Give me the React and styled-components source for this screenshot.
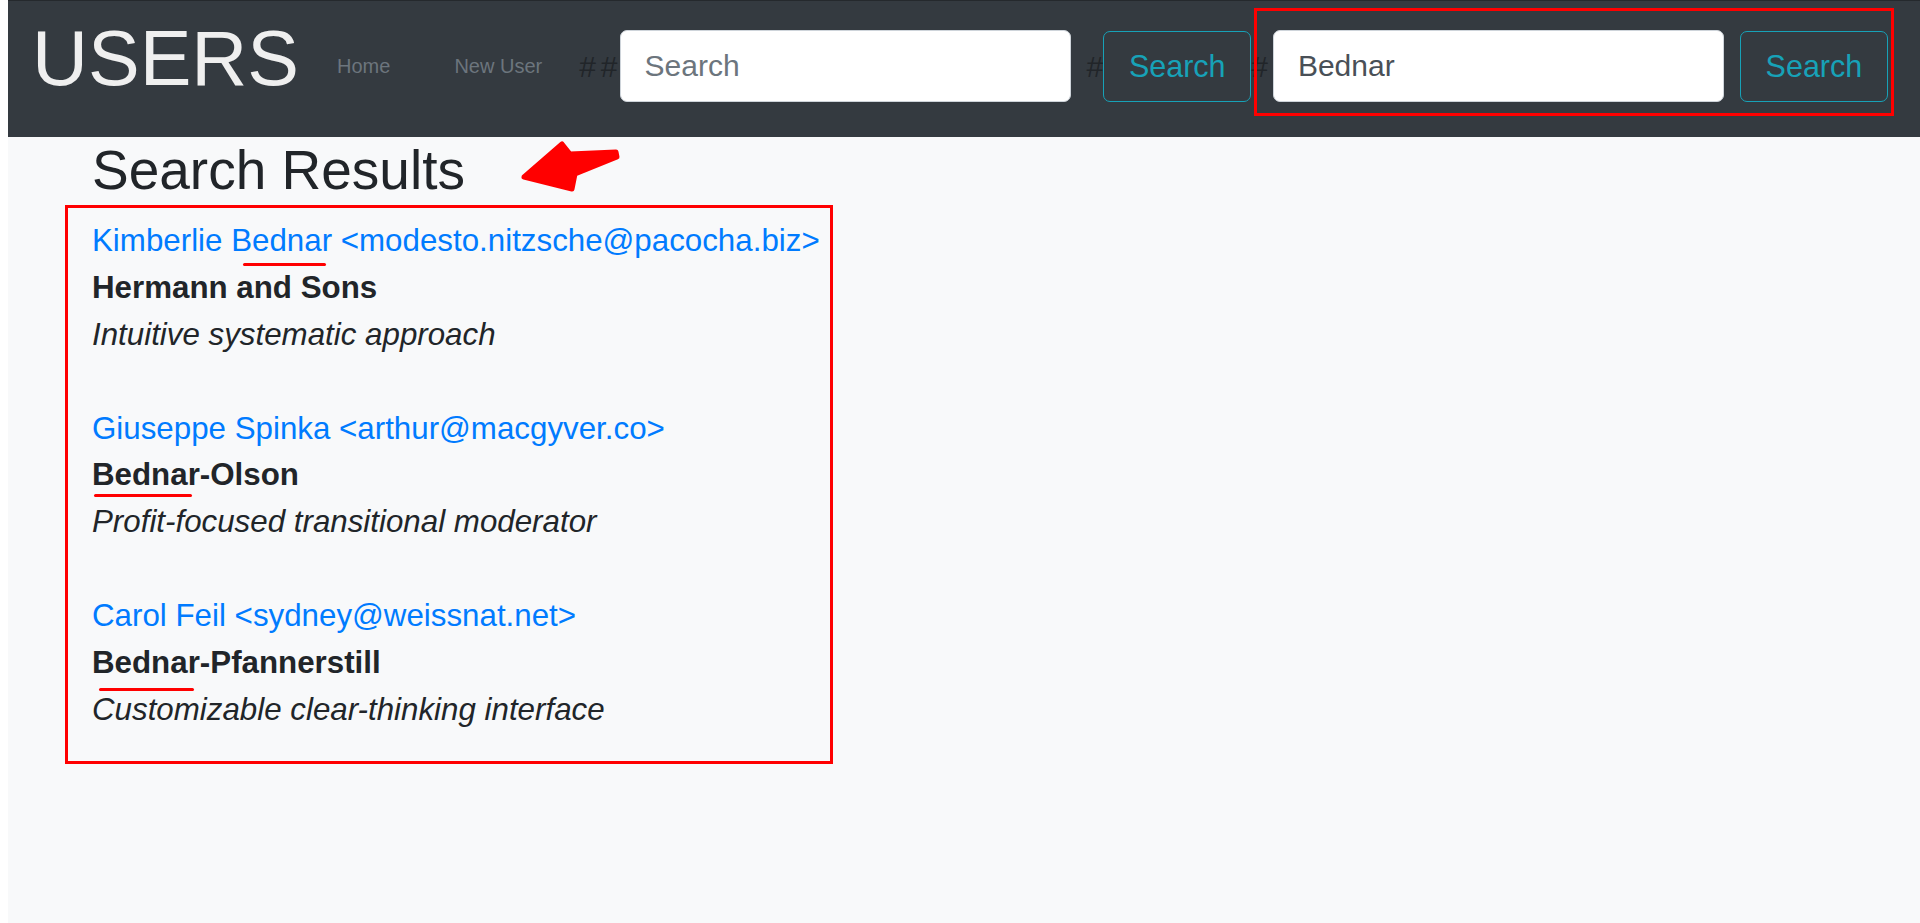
import React from "react";
import styled, { createGlobalStyle } from "styled-components";

const GlobalStyle = createGlobalStyle`
  html, body { margin: 0; padding: 0; background: #ffffff; }
  body {
    padding-left: 8px;
    font-family: "Liberation Sans", Arial, Helvetica, sans-serif;
    color: #212529;
  }
  * { box-sizing: border-box; }
`;

const Page = styled.div`
  min-height: 923px;
  background: #f8f9fa;
`;

const Navbar = styled.nav`
  display: flex;
  align-items: center;
  height: 137px;
  padding: 0 31px 6px 24px;
  background: #343a40;
  border-top: 1px solid #25292d;
`;

const Brand = styled.a`
  font-size: 77.5px;
  line-height: 1;
  color: #efefef;
  text-decoration: none;
  margin: 0 6px 15px 0;
`;

const NavLink = styled.a`
  font-size: 20px;
  line-height: 30px;
  color: #6c757d;
  padding: 0 32px;
  text-decoration: none;
`;

const Form = styled.form`
  display: flex;
  align-items: center;
  margin-left: ${(p) => p.$ml || 0}px;
  position: relative;
  ${(p) =>
    p.$marked &&
    `
    &::after {
      content: "";
      position: absolute;
      left: 3px;
      right: -6px;
      top: -22px;
      bottom: -14px;
      border: 3px solid #ff0000;
      pointer-events: none;
    }
  `}
`;

const Hash = styled.span`
  font-size: 30px;
  line-height: 1.5;
  color: #212529;
  letter-spacing: ${(p) => p.$ls || 0}px;
  margin-right: ${(p) => p.$mr || 0}px;
`;

const SearchInput = styled.input`
  width: 451px;
  height: 72px;
  padding: 0 24px;
  margin: 0 16px 0 ${(p) => p.$ml || 0}px;
  font-family: inherit;
  font-size: 30px;
  color: #495057;
  background: #ffffff;
  border: 1px solid #ced4da;
  border-radius: 7px;
  outline: none;
  &::placeholder { color: #6c757d; opacity: 1; }
`;

const SearchButton = styled.button`
  width: 148px;
  height: 71px;
  padding: 0;
  text-align: center;
  font-family: inherit;
  font-size: 30.5px;
  color: #17a2b8;
  background: transparent;
  border: 1px solid #17a2b8;
  border-radius: 7px;
  cursor: pointer;
`;

const Main = styled.main`
  padding-left: 57px;
`;

const Heading = styled.h2`
  position: relative;
  margin: 1px 0 2px 27px;
  font-size: 55px;
  font-weight: 400;
  line-height: 1.18;
  color: #212529;
`;

const Arrow = styled.svg`
  position: absolute;
  left: 423px;
  top: 0;
`;

const Results = styled.section`
  width: 768px;
  border: 3px solid #ff0000;
  padding: 10px 0 27px 24px;
  display: flex;
  flex-direction: column;
  gap: 46.8px;
`;

const Entry = styled.div`
  font-size: 31.3px;
  line-height: 1.5;
`;

const NameLink = styled.a`
  display: block;
  color: #007bff;
  text-decoration: none;
`;

const Company = styled.div`
  font-weight: 700;
  color: #212529;
`;

const CatchPhrase = styled.div`
  font-style: italic;
  color: #212529;
`;

const Mark = styled.span`
  position: relative;
  &::after {
    content: "";
    position: absolute;
    left: ${(p) => p.$l}px;
    right: ${(p) => p.$r}px;
    bottom: ${(p) => p.$b}px;
    height: 3px;
    background: #ff0000;
    border-radius: 2px;
  }
`;

export default function App() {
  return (
    <Page>
      <GlobalStyle />
      <Navbar>
        <Brand href="#">USERS</Brand>
        <NavLink href="#">Home</NavLink>
        <NavLink href="#">New User</NavLink>
        <Form $ml={5} onSubmit={(e) => e.preventDefault()}>
          <Hash $ls={5} $mr={-3}>##</Hash>
          <SearchInput type="text" placeholder="Search" />
          <Hash>#</Hash>
          <SearchButton type="submit">Search</SearchButton>
        </Form>
        <Form $marked onSubmit={(e) => e.preventDefault()}>
          <Hash>#</Hash>
          <SearchInput $ml={5} type="text" defaultValue="Bednar" />
          <SearchButton type="submit">Search</SearchButton>
        </Form>
      </Navbar>
      <Main>
        <Heading>
          Search Results
          <Arrow width="112" height="58" viewBox="0 0 112 58">
            <path
              d="M9 39 L47 6 L55 16 L101 14 L102 19 L60 36 L57 51 Z"
              fill="#ff0000"
              stroke="#ff0000"
              strokeWidth="5"
              strokeLinejoin="round"
            />
          </Arrow>
        </Heading>
        <Results>
          <Entry>
            <NameLink href="#">
              Kimberlie <Mark $l={12} $r={6} $b={-8}>Bednar</Mark>{" "}
              &lt;modesto.nitzsche@pacocha.biz&gt;
            </NameLink>
            <Company>Hermann and Sons</Company>
            <CatchPhrase>Intuitive systematic approach</CatchPhrase>
          </Entry>
          <Entry>
            <NameLink href="#">Giuseppe Spinka &lt;arthur@macgyver.co&gt;</NameLink>
            <Company>
              <Mark $l={2} $r={8} $b={-5}>Bednar</Mark>-Olson
            </Company>
            <CatchPhrase>Profit-focused transitional moderator</CatchPhrase>
          </Entry>
          <Entry>
            <NameLink href="#">Carol Feil &lt;sydney@weissnat.net&gt;</NameLink>
            <Company>
              <Mark $l={7} $r={6} $b={-11}>Bednar</Mark>-Pfannerstill
            </Company>
            <CatchPhrase>Customizable clear-thinking interface</CatchPhrase>
          </Entry>
        </Results>
      </Main>
    </Page>
  );
}
